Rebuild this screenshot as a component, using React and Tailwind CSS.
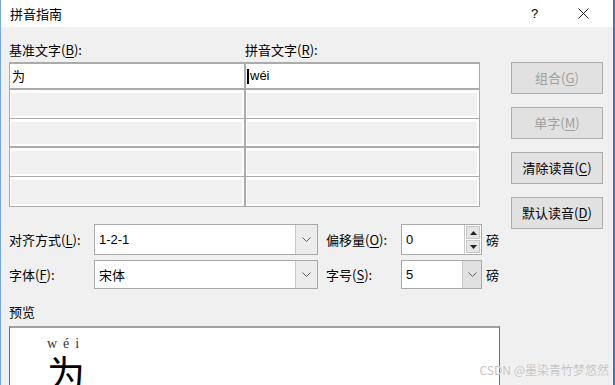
import React from 'react';

const ui = { fontFamily: '"Noto Sans CJK SC", "Liberation Sans", sans-serif' };

// label text with an underlined access key, e.g. 基准文字(B):
const Label = ({ text, k, tail = '):' }) => (
  <span>
    {text}(<span className="underline underline-offset-2">{k}</span>{tail}
  </span>
);

const Chevron = () => (
  <svg width="9" height="6" viewBox="0 0 9 6" fill="none" stroke="#606060" strokeWidth="1">
    <path d="M0.5 0.5L4.5 4.5L8.5 0.5" />
  </svg>
);

const Cell = () => (
  <div className="flex-1 h-full bg-white pt-[3px] pb-[2px] pl-[1px] pr-[2px]">
    <div className="w-full h-full bg-[#f0f0f0]" />
  </div>
);

const Button = ({ children, disabled }) => (
  <div
    className={`h-[32px] w-[92px] flex items-center justify-center border border-[#adadad] bg-[#e1e1e1] text-[13px] ${
      disabled ? 'text-[#a0a0a0]' : 'text-black'
    }`}
  >
    {children}
  </div>
);

export default function App() {
  return (
    <div
      className="relative w-[615px] h-[385px] overflow-hidden bg-[#f0f0f0] border-l border-l-[#7aa7dc] border-r-2 border-r-[#2b7bd0] text-black"
      style={ui}
    >
      {/* Title bar */}
      <div className="h-[27px] bg-white flex items-center pl-[9px] pr-[24px] text-[13px]">
        <span className="flex-1">拼音指南</span>
        <span className="w-[14px] text-[13px] mr-[33px]" style={{ fontFamily: '"Liberation Sans", sans-serif' }}>?</span>
        <svg width="11" height="11" viewBox="0 0 11 11" stroke="#222" strokeWidth="1" fill="none">
          <path d="M0.5 0.5L10.5 10.5M10.5 0.5L0.5 10.5" />
        </svg>
      </div>

      <div className="pl-[8px]">
        {/* Column labels */}
        <div className="flex text-[13px] leading-[16px] mt-[15px]">
          <div className="w-[236px]"><Label text="基准文字" k="B" /></div>
          <div><Label text="拼音文字" k="R" /></div>
        </div>

        <div className="flex items-start h-[150px] mt-[4px]">
          {/* Text grid */}
          <div className="w-[471px] border border-[#ababab] border-t-2">
            <div className="flex h-[26px] border-b-2 border-[#ababab] bg-white text-[13px]">
              <div className="w-[234px] pl-[2px] flex items-center">为</div>
              <div className="w-[2px] bg-[#ababab]" />
              <div className="flex-1 flex items-center pl-[1px]" style={{ fontFamily: '"Liberation Sans", sans-serif' }}>
                <span className="w-[2px] h-[15px] bg-black mr-[1px]" />
                wéi
              </div>
            </div>
            {[0, 1, 2, 3].map((i) => (
              <div key={i} className={`flex h-[29px] border-[#ababab] ${i === 3 ? '' : i === 1 ? 'border-b-2' : 'border-b'}`}>
                <div className="w-[234px] h-full flex"><Cell /></div>
                <div className="w-[2px] bg-[#ababab]" />
                <Cell />
              </div>
            ))}
          </div>

          {/* Buttons */}
          <div className="ml-[31px] flex flex-col gap-[13px]">
            <Button disabled>组合(<span className="underline underline-offset-2">G</span>)</Button>
            <Button disabled>单字(<span className="underline underline-offset-2">M</span>)</Button>
            <Button>清除读音(<span className="underline underline-offset-2">C</span>)</Button>
            <Button>默认读音(<span className="underline underline-offset-2">D</span>)</Button>
          </div>
        </div>

        {/* Options */}
        <div className="mt-[12px] flex flex-col gap-[5px] text-[13px]">
          <div className="flex items-center h-[31px]">
            <div className="w-[85px]"><Label text="对齐方式" k="L" /></div>
            <div className="w-[224px] h-full flex border border-[#a9a9a9] bg-white">
              <div className="flex-1 flex items-center pl-[4px]" style={{ fontFamily: '"Liberation Sans", sans-serif' }}>1-2-1</div>
              <div className="w-[22px] flex items-center justify-center bg-[#ececec] border-l border-[#c8c8c8]"><Chevron /></div>
            </div>
            <div className="w-[75px] ml-[8px]"><Label text="偏移量" k="O" /></div>
            <div className="w-[81px] h-full flex border border-[#a9a9a9] bg-white">
              <div className="flex-1 flex items-center pl-[4px]" style={{ fontFamily: '"Liberation Sans", sans-serif' }}>0</div>
              <div className="w-[17px] flex flex-col border-l border-[#c8c8c8] p-[1px] gap-[1px]">
                <div className="flex-1 bg-[#e5e5e5] border border-[#c8c8c8] flex items-center justify-center">
                  <svg width="7" height="4" viewBox="0 0 7 4"><path d="M0 4L3.5 0L7 4Z" fill="#222" /></svg>
                </div>
                <div className="flex-1 bg-[#e5e5e5] border border-[#c8c8c8] flex items-center justify-center">
                  <svg width="7" height="4" viewBox="0 0 7 4"><path d="M0 0L3.5 4L7 0Z" fill="#222" /></svg>
                </div>
              </div>
            </div>
            <span className="ml-[4px]">磅</span>
          </div>

          <div className="flex items-center h-[29px]">
            <div className="w-[85px]"><Label text="字体" k="F" /></div>
            <div className="w-[224px] h-full flex border border-[#a9a9a9] bg-white">
              <div className="flex-1 flex items-center pl-[4px]">宋体</div>
              <div className="w-[22px] flex items-center justify-center bg-[#ececec] border-l border-[#c8c8c8]"><Chevron /></div>
            </div>
            <div className="w-[75px] ml-[8px]"><Label text="字号" k="S" /></div>
            <div className="w-[81px] h-full flex border border-[#a9a9a9] bg-white">
              <div className="flex-1 flex items-center pl-[4px]" style={{ fontFamily: '"Liberation Sans", sans-serif' }}>5</div>
              <div className="w-[19px] flex items-center justify-center bg-[#e1e1e1] border-l border-[#c8c8c8]"><Chevron /></div>
            </div>
            <span className="ml-[4px]">磅</span>
          </div>
        </div>

        {/* Preview */}
        <div className="mt-[15px] text-[13px] leading-[16px]">预览</div>
        <div className="mt-[6px] w-[491px] h-[80px] bg-white border-t-2 border-t-[#a0a0a0] border-l border-l-[#6d6d6d] border-r border-r-[#6d6d6d]">
          <div className="pl-[37px] pt-[9px]">
            <div className="text-[14px] leading-[14px] tracking-[6px] text-[#333]" style={{ fontFamily: '"Liberation Serif", serif' }}>wéi</div>
            <div className="text-[38px] leading-[38px] mt-[2px]" style={{ fontFamily: '"Noto Sans CJK SC", serif' }}>为</div>
          </div>
        </div>
      </div>

      {/* watermark */}
      <div className="absolute right-[4px] bottom-[6px] text-[12px] text-[#c4c4c4]" style={{ textShadow: '0 0 1px #fff' }}>
        CSDN @墨染青竹梦悠然
      </div>
    </div>
  );
}
